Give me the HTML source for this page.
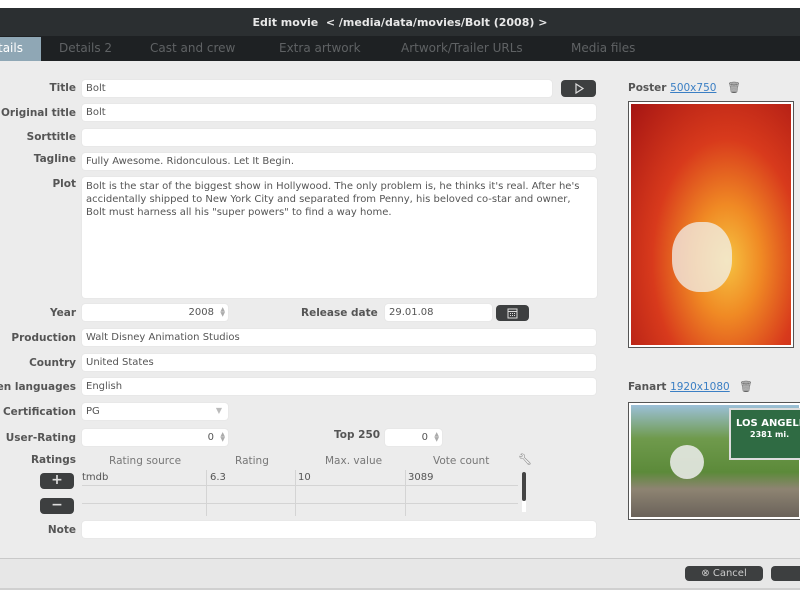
<!DOCTYPE html>
<html><head><style>
*{margin:0;padding:0;box-sizing:border-box}
body{width:800px;height:600px;overflow:hidden;background:#fff;font-family:"DejaVu Sans","Liberation Sans",sans-serif;font-size:10.5px;color:#555;position:relative}
.a{position:absolute}
.lbl{position:absolute;right:724px;font-weight:bold;color:#555;font-size:10.5px;white-space:nowrap;text-align:right}
.in{position:absolute;background:#fff;border-radius:3px;height:17px;box-shadow:0 0 1px #ccc;padding:3px 4px 0;color:#555;font-size:10px;white-space:nowrap;overflow:hidden}
.btn{position:absolute;background:#3d3f40;border-radius:4px;color:#ddd}
.tab{position:absolute;top:41px;color:#5f6264;font-size:12px}
.sp{position:absolute;right:3px;top:3px;font-size:6px;line-height:5px;color:#aaa}
</style></head><body>
<div class="a" style="left:0;top:8px;width:800px;height:28px;background:#2b2f31"></div>
<div class="a" style="left:0;top:16px;width:800px;text-align:center;color:#e8e8e8;font-weight:bold;font-size:11px">Edit movie &nbsp;&lt; /media/data/movies/Bolt (2008) &gt;</div>
<div class="a" style="left:0;top:36px;width:800px;height:25px;background:#1e2123"></div>
<div class="a" style="left:0;top:37px;width:41px;height:24px;background:#8fa7b5"></div>
<div class="a" style="left:0;top:61px;width:0;height:0;border-left:6px solid transparent;border-right:6px solid transparent;border-top:7px solid #8fa7b5"></div>
<div class="tab" style="left:-2px;color:#fff">tails</div>
<div class="tab" style="left:59px">Details 2</div>
<div class="tab" style="left:150px">Cast and crew</div>
<div class="tab" style="left:279px">Extra artwork</div>
<div class="tab" style="left:401px">Artwork/Trailer URLs</div>
<div class="tab" style="left:571px">Media files</div>
<div class="a" style="left:0;top:61px;width:800px;height:497px;background:#ececec"></div>
<div class="a" style="left:0;top:558px;width:800px;height:1px;background:#c9c9c9"></div>
<div class="a" style="left:0;top:559px;width:800px;height:29px;background:#e7e7e7"></div>
<div class="a" style="left:0;top:588px;width:800px;height:2px;background:#d0d0d0"></div>

<div class="lbl" style="top:82px">Title</div><div class="in" style="left:82px;top:80px;width:470px">Bolt</div>
<div class="btn" style="left:561px;top:80px;width:35px;height:17px"><svg width="35" height="17"><path d="M15 4 L22 8.5 L15 13 Z" fill="none" stroke="#ddd" stroke-width="1.2"/></svg></div>
<div class="lbl" style="top:107px">Original title</div><div class="in" style="left:82px;top:104px;width:514px">Bolt</div>
<div class="lbl" style="top:131px">Sorttitle</div><div class="in" style="left:82px;top:129px;width:514px"></div>
<div class="lbl" style="top:153px">Tagline</div><div class="in" style="left:82px;top:153px;width:514px">Fully Awesome. Ridonculous. Let It Begin.</div>
<div class="lbl" style="top:178px">Plot</div><div class="in" style="left:82px;top:177px;width:515px;height:121px;white-space:normal;line-height:13px">Bolt is the star of the biggest show in Hollywood. The only problem is, he thinks it's real. After he's accidentally shipped to New York City and separated from Penny, his beloved co-star and owner, Bolt must harness all his "super powers" to find a way home.</div>
<div class="lbl" style="top:307px">Year</div><div class="in" style="left:82px;top:304px;width:146px;text-align:right;padding-right:14px">2008<span class="sp">▲<br>▼</span></div>
<div class="a" style="left:301px;top:307px;font-weight:bold">Release date</div><div class="in" style="left:385px;top:304px;width:107px">29.01.08</div>
<div class="btn" style="left:496px;top:305px;width:33px;height:16px"><svg width="33" height="16"><rect x="12" y="4" width="9" height="9" fill="none" stroke="#ddd"/><path d="M12 6.5h9M14 8.5h1M16 8.5h1M18 8.5h1M14 10.5h1M16 10.5h1M18 10.5h1" stroke="#ddd"/></svg></div>
<div class="lbl" style="top:332px">Production</div><div class="in" style="left:82px;top:329px;width:514px">Walt Disney Animation Studios</div>
<div class="lbl" style="top:357px">Country</div><div class="in" style="left:82px;top:354px;width:514px">United States</div>
<div class="lbl" style="top:381px">en languages</div><div class="in" style="left:82px;top:378px;width:514px">English</div>
<div class="lbl" style="top:406px">Certification</div><div class="in" style="left:82px;top:403px;width:146px">PG<span class="a" style="right:6px;top:3px;color:#bbb;font-size:8px">▼</span></div>
<div class="lbl" style="top:432px">User-Rating</div><div class="in" style="left:82px;top:429px;width:146px;text-align:right;padding-right:14px">0<span class="sp">▲<br>▼</span></div>
<div class="a" style="left:334px;top:429px;font-weight:bold">Top 250</div><div class="in" style="left:385px;top:429px;width:57px;text-align:right;padding-right:14px">0<span class="sp">▲<br>▼</span></div>
<div class="lbl" style="top:454px">Ratings</div>
<div class="btn" style="left:40px;top:473px;width:34px;height:16px;text-align:center;font-size:14px;line-height:15px;font-weight:bold">+</div>
<div class="btn" style="left:40px;top:498px;width:34px;height:16px;text-align:center;font-size:14px;line-height:14px;font-weight:bold">−</div>
<div class="a" style="left:109px;top:455px;color:#777">Rating source</div>
<div class="a" style="left:235px;top:455px;color:#777">Rating</div>
<div class="a" style="left:325px;top:455px;color:#777">Max. value</div>
<div class="a" style="left:433px;top:455px;color:#777">Vote count</div>
<div class="a" style="left:518px;top:453px;color:#777;font-size:11px">🔧︎</div>
<div class="a" style="left:82px;top:470px;width:436px;height:46px;font-size:10px">
<div class="a" style="left:0;top:2px">tmdb</div><div class="a" style="left:128px;top:2px">6.3</div><div class="a" style="left:216px;top:2px">10</div><div class="a" style="left:326px;top:2px">3089</div>
<div class="a" style="left:0;top:15px;width:436px;height:1px;background:#d4d4d4"></div>
<div class="a" style="left:0;top:33px;width:436px;height:1px;background:#d4d4d4"></div>
<div class="a" style="left:124px;top:0;width:1px;height:46px;background:#d4d4d4"></div>
<div class="a" style="left:213px;top:0;width:1px;height:46px;background:#d4d4d4"></div>
<div class="a" style="left:323px;top:0;width:1px;height:46px;background:#d4d4d4"></div>
</div>
<div class="a" style="left:522px;top:472px;width:4px;height:40px;background:#fff"></div>
<div class="a" style="left:522px;top:472px;width:4px;height:29px;background:#444;border-radius:2px"></div>
<div class="lbl" style="top:524px">Note</div><div class="in" style="left:82px;top:521px;width:514px"></div>

<div class="a" style="left:628px;top:82px;font-weight:bold">Poster <a style="color:#3b7fc4;font-weight:normal;text-decoration:underline">500x750</a></div>
<div class="a" style="left:727px;top:81px;color:#666;font-size:11px">🗑︎</div>
<div class="a" style="left:628px;top:101px;width:166px;height:247px;border:1px solid #555;background:#fff;padding:2px">
<div style="width:100%;height:100%;background:radial-gradient(ellipse at 60% 65%,#f6c342 0%,#f08a24 25%,#d83a1c 55%,#a51513 100%)"></div></div>
<div class="a" style="left:672px;top:222px;width:60px;height:70px;border-radius:45%;background:#f2f2ef;opacity:.75"></div>
<div class="a" style="left:628px;top:381px;font-weight:bold">Fanart <a style="color:#3b7fc4;font-weight:normal;text-decoration:underline">1920x1080</a></div>
<div class="a" style="left:739px;top:380px;color:#666;font-size:11px">🗑︎</div>
<div class="a" style="left:628px;top:402px;width:174px;height:118px;border:1px solid #555;background:#fff;padding:2px">
<div style="width:100%;height:100%;background:linear-gradient(#9cc0d8 0%,#6f9a4c 30%,#5c8a3a 60%,#8e8472 75%,#6a625a 100%)"></div></div>
<div class="a" style="left:729px;top:408px;width:75px;height:52px;background:#2f6b43;border:2px solid #ddd;color:#fff;font-weight:bold;font-size:10px;padding:8px 0 0 5px;white-space:nowrap">LOS ANGELES<br><span style="font-size:8px;padding-left:14px">2381 mi.</span></div>
<div class="a" style="left:670px;top:445px;width:34px;height:34px;border-radius:50%;background:#eee;opacity:.85"></div>
<div class="btn" style="left:685px;top:566px;width:78px;height:15px;text-align:center;font-size:10px;line-height:15px;color:#ccc">⊗ Cancel</div>
<div class="btn" style="left:771px;top:566px;width:40px;height:15px"></div>
</body></html>
